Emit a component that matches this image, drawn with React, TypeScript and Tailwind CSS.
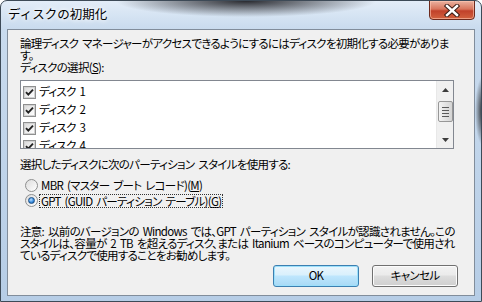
import { useState } from 'react';

const font = { fontFamily: '"Noto Sans CJK JP", "Noto Sans", sans-serif' };

const Mn = ({ k }: { k: string }) => <span className="underline underline-offset-[1px]">{k}</span>;

const CheckBox = ({ checked }: { checked: boolean }) => (
  <span className="w-[13px] h-[13px] shrink-0 border border-[#8e8f8f] bg-white flex items-center justify-center">
    <span className="w-[11px] h-[11px] border border-[#d2d2d2] bg-[linear-gradient(135deg,#dcdcdc,#ffffff)] flex items-center justify-center">
      {checked && (
        <svg width="9" height="9" viewBox="0 0 9 9">
          <path d="M1 4.2 L3.3 6.6 L8 1.6" fill="none" stroke="#232323" strokeWidth="1.9" />
        </svg>
      )}
    </span>
  </span>
);

const Radio = ({ checked }: { checked: boolean }) => (
  <span className="w-[13px] h-[13px] shrink-0 rounded-full border border-[#8e8f8f] bg-[linear-gradient(135deg,#dcdcdc,#ffffff)] flex items-center justify-center">
    {checked && (
      <span className="w-[7px] h-[7px] rounded-full border border-[#1b4e85] bg-[radial-gradient(circle_at_40%_35%,#b8dcff,#3a8fe0_55%,#0f4c8f)]" />
    )}
  </span>
);

const ScrollBar = () => (
  <div className="w-[17px] h-full bg-[#f0f0f0] border-l border-[#e8e8e8] flex flex-col items-center">
    <div className="h-[17px] w-full flex items-center justify-center">
      <svg width="7" height="4" viewBox="0 0 7 4"><path d="M0 4 L3.5 0 L7 4 Z" fill="#3c3c3c" /></svg>
    </div>
    <div className="mt-[3px] h-[21px] w-[15px] rounded-[2px] border border-[#979797] bg-[linear-gradient(to_right,#f3f3f3,#e3e3e3_50%,#d4d4d4)] flex flex-col items-center justify-center gap-[2px]">
      <span className="w-[7px] h-px bg-[#5a5a5a]" />
      <span className="w-[7px] h-px bg-[#5a5a5a]" />
      <span className="w-[7px] h-px bg-[#5a5a5a]" />
      <span className="w-[7px] h-px bg-[#5a5a5a]" />
    </div>
    <div className="flex-1" />
    <div className="h-[17px] w-full flex items-center justify-center">
      <svg width="7" height="4" viewBox="0 0 7 4"><path d="M0 0 L3.5 4 L7 0 Z" fill="#3c3c3c" /></svg>
    </div>
  </div>
);

const WinButton = ({ label, isDefault }: { label: string; isDefault?: boolean }) => (
  <button
    className={
      isDefault
        ? 'w-[86px] h-[22px] rounded-[3px] border border-[#3c7fb1] shadow-[inset_0_0_0_1px_#9ce0fb] bg-[linear-gradient(to_bottom,#eaf6fd_0%,#d9f0fc_45%,#bee6fd_50%,#a7d9f5_100%)] text-[11.5px] leading-none text-black'
        : 'w-[86px] h-[22px] rounded-[3px] border border-[#707070] shadow-[inset_0_0_0_1px_#fcfcfc] bg-[linear-gradient(to_bottom,#f2f2f2_0%,#ebebeb_45%,#dddddd_50%,#cfcfcf_100%)] text-[11.5px] leading-none text-black'
    }
  >
    {label}
  </button>
);

export default function App() {
  const [disks] = useState([1, 2, 3, 4]);

  return (
    <div
      style={font}
      className="w-[482px] h-[302px] overflow-hidden rounded-t-[7px] border border-[#3d4a57] bg-[radial-gradient(ellipse_130px_16px_at_245px_0px,rgba(20,20,25,0.9),rgba(20,20,25,0)),radial-gradient(ellipse_8px_35px_at_482px_110px,rgba(10,10,10,0.9),rgba(10,10,10,0)),linear-gradient(to_bottom,#e3edf8_0px,#c9dbee_28px,#b6cde6_100%)] flex flex-col text-black"
    >
      <div className="relative h-[28px] flex items-center pl-[7px] shrink-0">
        <span className="text-[12.5px] leading-none mt-[-1px] [text-shadow:0_0_6px_#fff,0_0_4px_#fff]">ディスクの初期化</span>
        <div className="absolute top-[-1px] right-[6px] w-[46px] h-[20px] rounded-b-[4px] border border-[#6d2a1d] shadow-[inset_0_0_0_1px_rgba(255,200,180,0.6)] bg-[linear-gradient(to_bottom,#eab2a0_0%,#d8755c_45%,#c1412a_55%,#d2623f_100%)] flex items-center justify-center">
          <svg width="16" height="13" viewBox="0 0 16 13">
            <path d="M3 2 L13 11 M13 2 L3 11" stroke="#3b1d16" strokeWidth="4.4" strokeLinecap="square" />
            <path d="M3 2 L13 11 M13 2 L3 11" stroke="#ffffff" strokeWidth="2.4" strokeLinecap="square" />
          </svg>
        </div>
      </div>

      <div className="mx-[6px] h-[267px] border border-[#818d9b] bg-[#f0f0f0] pl-[12px] pr-[16px] flex flex-col text-[11.5px] [font-feature-settings:'palt'] tracking-[-0.7px] [word-spacing:2px]">
        <p className="mt-[7px] leading-[12px] whitespace-nowrap">
          論理ディスク マネージャーがアクセスできるようにするにはディスクを初期化する必要がありま
          <br />
          す。
        </p>
        <p className="leading-[12px] whitespace-nowrap">
          ディスクの選択(<Mn k="S" />):
        </p>

        <div className="mt-[7px] w-[434px] h-[69px] border border-[#828790] bg-white flex overflow-hidden">
          <div className="flex-1 pt-[2px] pl-[2px] overflow-hidden">
            {disks.map((d) => (
              <div key={d} className="h-[18px] flex items-center gap-[3px] whitespace-nowrap">
                <CheckBox checked />
                <span className="leading-none">ディスク {d}</span>
              </div>
            ))}
          </div>
          <ScrollBar />
        </div>

        <p className="mt-[9px] leading-[12px] whitespace-nowrap">
          選択したディスクに次のパーティション スタイルを使用する:
        </p>
        <div className="mt-[8px] flex flex-col pl-[5px]">
          <div className="h-[15px] flex items-center gap-[3px] whitespace-nowrap">
            <Radio checked={false} />
            <span className="leading-none">
              MBR (マスター ブート レコード)(<Mn k="M" />)
            </span>
          </div>
          <div className="h-[15px] flex items-center gap-[2px] whitespace-nowrap">
            <Radio checked />
            <span className="leading-[12px] px-[1px] outline outline-1 outline-dotted outline-[#333]">
              GPT (GUID パーティション テーブル)(<Mn k="G" />)
            </span>
          </div>
        </div>

        <p className="mt-[17px] leading-[12px] whitespace-nowrap">
          注意: 以前のバージョンの Windows では、GPT パーティション スタイルが認識されません。この
          <br />
          スタイルは、容量が 2 TB を超えるディスク、または Itanium ベースのコンピューターで使用され
          <br />
          ているディスクで使用することをお勧めします。
        </p>

        <div className="mt-[4px] flex justify-end gap-[13px]">
          <WinButton label="OK" isDefault />
          <WinButton label="キャンセル" />
        </div>
      </div>
    </div>
  );
}
